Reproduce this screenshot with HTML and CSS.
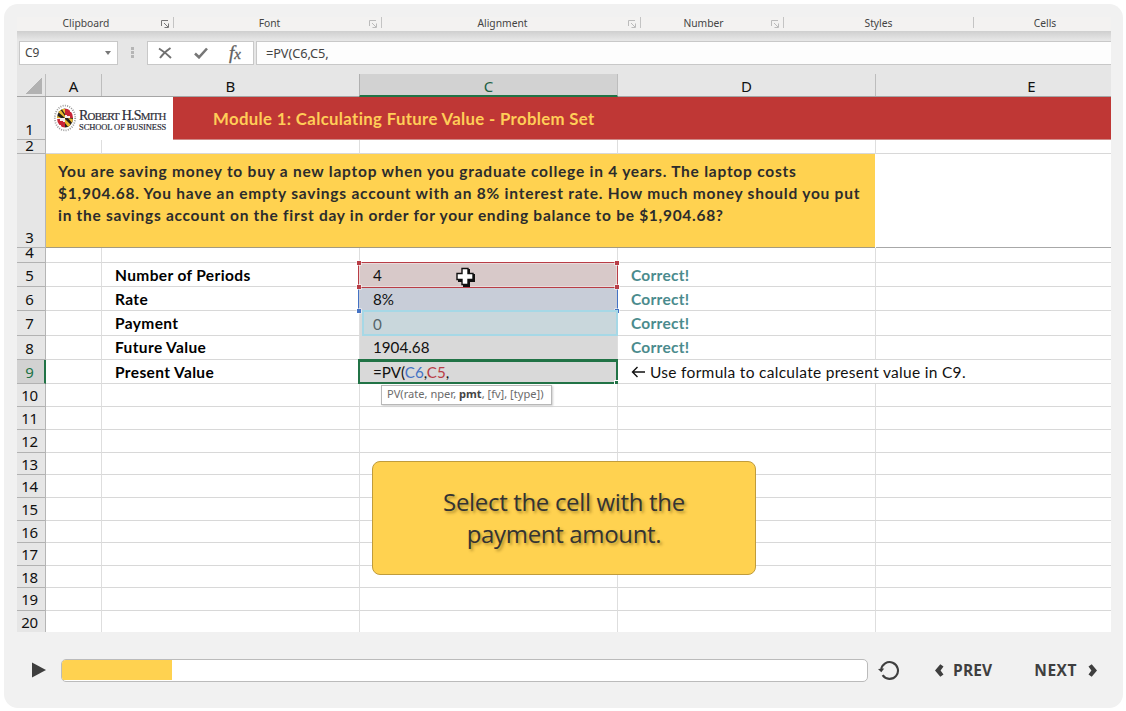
FILE: index.html
```html
<!DOCTYPE html>
<html lang="en">
<head>
<meta charset="utf-8">
<title>Calculating Future Value</title>
<link rel="stylesheet" href="styles.css">
</head>
<body>
<svg class="defs" width="0" height="0">
  <symbol id="launcher" viewBox="0 0 9 8"><path d="M.5 6V.5H7M3 3l4 4M7.5 3.5v4h-4" fill="none" stroke="currentColor"/></symbol>
</svg>
<main class="player">
  <section class="screen">
    <div class="ribbon">
      <div class="group clipboard"><span>Clipboard</span><svg class="launch"><use href="#launcher"/></svg></div>
      <div class="group font"><span>Font</span><svg class="launch pale"><use href="#launcher"/></svg></div>
      <div class="group alignment"><span>Alignment</span><svg class="launch pale"><use href="#launcher"/></svg></div>
      <div class="group number"><span>Number</span><svg class="launch pale"><use href="#launcher"/></svg></div>
      <div class="group styles"><span>Styles</span></div>
      <div class="group cells"><span>Cells</span></div>
    </div>
    <div class="formula-bar">
      <div class="name-box"><span>C9</span><i class="caret"></i></div>
      <div class="dots"><i></i><i></i><i></i></div>
      <div class="tools">
        <svg width="14" height="12" viewBox="0 0 14 12"><path d="M1 1.5C5 4 9 7 13 11M12.5 1C8 4 4 8 2 11" fill="none" stroke="#707070" stroke-width="1.9"/></svg>
        <svg width="14" height="12" viewBox="0 0 14 12"><path d="M1 6.5l4 3.8L13 1.5" fill="none" stroke="#777" stroke-width="2.6"/></svg>
        <span class="fx">f<small>x</small></span>
      </div>
      <div class="formula">=PV(C6,C5,</div>
    </div>
    <div class="columns">
      <div class="corner"><i></i></div><div>A</div><div>B</div><div class="active">C</div><div>D</div><div>E</div>
    </div>
    <div class="sheet">
      <div class="rh r1">1</div>
      <div class="logo">
        <svg width="24" height="28" viewBox="0 0 24 28">
          <ellipse cx="12" cy="14" rx="10.2" ry="12.4" fill="none" stroke="#999" stroke-width="1.8" stroke-dasharray="1 1.3"/>
          <clipPath id="globe"><ellipse cx="12" cy="14" rx="8" ry="9.5"/></clipPath>
          <g clip-path="url(#globe)">
            <path fill="#f3eeee" d="M0 0h24v28H0z"/>
            <path fill="#26221d" d="M3 4h9v10H3zM12 14h9v10h-9z"/>
            <path fill="#eab92f" d="M4 7l3-2 5 7v2zM8 4l4 1v5zM3 11l5 3H3zM12 15l7 7-3 2-4-5zM15 14l5 1v5z"/>
            <path fill="#c92535" d="M12 4h5v4h4v6h-4v-3h-5zM3 15h4v3h5v6H8v-3H3z"/>
            <path fill="#c92535" d="M14 9h4v3h-4zM7 17h3v3H7z"/>
          </g>
        </svg>
        <div class="wordmark"><b>R<small>OBERT</small> H.S<small>MITH</small></b><span>SCHOOL OF BUSINESS</span></div>
      </div>
      <div class="banner">Module 1: Calculating Future Value - Problem Set</div>

      <div class="rh r2">2</div><i></i><i></i><i></i><i></i><i class="edge"></i>

      <div class="rh r3">3</div>
      <div class="problem"><p>You are saving money to buy a new laptop when you graduate college in 4 years. The laptop costs</p><p>$1,904.68. You have an empty savings account with an 8% interest rate. How much money should you put</p><p>in the savings account on the first day in order for your ending balance to be $1,904.68?</p></div><i class="edge below-problem"></i>

      <div class="rh r4">4</div><i></i><i></i><i></i><i></i><i class="edge"></i>

      <div class="rh">5</div><i></i><div class="label">Number of Periods</div>
      <div class="value periods">4<b class="h tl"></b><b class="h tr"></b><b class="h bl"></b><b class="h br"></b>
        <svg class="cursor" width="20" height="20" viewBox="0 0 20 20"><path d="M8 2h7v5h5v8h-5v5H8v-5H3V7h5z" fill="#111"/><path d="M7 1.5h6v5h5v6h-5v5H7v-5H2v-6h5z" fill="#fff" stroke="#111" stroke-width="1.4"/></svg></div>
      <div class="check">Correct!</div><i class="edge"></i>

      <div class="rh">6</div><i></i><div class="label">Rate</div><div class="value rate">8%<b class="h bl"></b><b class="h br"></b></div><div class="check">Correct!</div><i class="edge"></i>

      <div class="rh">7</div><i></i><div class="label">Payment</div><div class="value payment"><span>0</span></div><div class="check">Correct!</div><i class="edge"></i>

      <div class="rh">8</div><i></i><div class="label up">Future Value</div><div class="value up">1904.68</div><div class="check up">Correct!</div><i class="edge"></i>

      <div class="rh active">9</div><i></i><div class="label">Present Value</div>
      <div class="value present"><span>=PV(<em class="blue">C6</em>,<em class="red">C5</em>,</span><b class="grip"></b>
        <div class="hint">PV(rate, nper, <strong>pmt</strong>, [fv], [type])</div></div>
      <div class="note"><svg width="15" height="12" viewBox="0 0 15 12"><path d="M14 6H1.5M6.5 1l-5 5 5 5" fill="none" stroke="#111" stroke-width="1.4"/></svg><span>Use formula to calculate present value in C9.</span></div>

      <div class="rh">10</div><i></i><i></i><i></i><i></i><i class="edge"></i>
      <div class="rh">11</div><i></i><i></i><i></i><i></i><i class="edge"></i>
      <div class="rh">12</div><i></i><i></i><i></i><i></i><i class="edge"></i>
      <div class="rh">13</div><i></i><i></i><i></i><i></i><i class="edge"></i>
      <div class="rh">14</div><i></i><i></i><i></i><i></i><i class="edge"></i>
      <div class="rh">15</div><i></i><i></i><i></i><i></i><i class="edge"></i>
      <div class="rh">16</div><i></i><i></i><i></i><i></i><i class="edge"></i>
      <div class="rh">17</div><i></i><i></i><i></i><i></i><i class="edge"></i>
      <div class="rh">18</div><i></i><i></i><i></i><i></i><i class="edge"></i>
      <div class="rh">19</div><i></i><i></i><i></i><i></i><i class="edge"></i>
      <div class="rh last">20</div><i class="last"></i><i class="last"></i><i class="last"></i><i class="last"></i><i class="edge last"></i>
    </div>
    <div class="callout">Select the cell with the<br>payment amount.</div>
  </section>
  <footer class="controls">
    <svg class="play" width="14" height="16" viewBox="0 0 14 16"><path d="M0 .5L14 8 0 15.5z" fill="#3f3f3f"/></svg>
    <div class="track"><div class="fill"></div></div>
    <svg class="replay" width="22" height="21" viewBox="0 0 22 21"><path d="M3.2 9.8A8.4 8.4 0 1 1 4.6 15.2" fill="none" stroke="#3f3f3f" stroke-width="2.1"/><path d="M0 9l6.2-.5L3.3 12.3z" fill="#3f3f3f"/></svg>
    <div class="nav prev"><svg width="9" height="13" viewBox="0 0 9 13"><path d="M0 6.5L5.3.3 8.500 2.5 5.6 6.5l2.9 4-3.2 2.2z" fill="#3f3f3f"/></svg><span>PREV</span></div>
    <div class="nav next"><span>NEXT</span><svg width="9" height="13" viewBox="0 0 9 13"><path d="M9 6.5L3.7.3.5 2.5l2.9 4-2.9 4 3.2 2.2z" fill="#3f3f3f"/></svg></div>
  </footer>
</main>
</body>
</html>
```
FILE: styles.css
```css
* { box-sizing: border-box; }
body { margin: 0; background: #fff; font-family: Lato, sans-serif; color: #111; }
.defs { display: block; height: 0; }
.player { width: 1119px; height: 704px; margin: 4px 0 0 4px; padding: 13px 12px 0 13px; background: #f1f1f1; border-radius: 14px; }
.screen { position: relative; width: 1094px; height: 615px; background: #e6e6e6; overflow: hidden; white-space: nowrap; }

.ribbon { display: flex; height: 14px; background: #f3f2f1; font: 10.3px/14px "Noto Sans", sans-serif; color: #444; }
.group { position: relative; height: 11px; border-right: 1px solid #c4c4c4; }
.group span { display: block; line-height: 13px; text-align: center; }
.clipboard { width: 157px; padding-right: 18px; }
.font { width: 208px; padding-right: 16px; }
.alignment { width: 259px; padding-right: 17px; }
.number { width: 143px; padding-right: 17px; }
.styles { width: 190px; }
.cells { width: 120px; padding-left: 22px; border: 0; }
.launch { position: absolute; right: 3px; top: 3px; width: 9px; height: 8px; color: #777; }
.launch.pale { color: #bbb; }

.formula-bar { display: flex; height: 43px; padding: 10px 0 9px 2px; background: linear-gradient(#cfcfcf, #e6e6e6 9px); font: 13px/22px "Noto Sans", sans-serif; color: #444; }
.name-box { display: flex; justify-content: space-between; align-items: center; width: 99px; padding: 0 6px 0 5px; background: #fff; border: 1px solid #c8c8c8; font-size: 12px; }
.caret { border: 3.5px solid transparent; border-top: 4px solid #777; border-bottom: 0; }
.dots { display: flex; flex-direction: column; gap: 1px; width: 29px; padding: 6px 0 0 13px; }
.dots i { width: 3px; height: 3px; background: #b5b5b5; }
.tools { display: flex; align-items: center; width: 107px; padding-left: 10px; gap: 22px; background: #fff; border: 1px solid #c8c8c8; }
.fx { margin-left: -1px; font: italic 19px/20px "Liberation Serif", serif; color: #606060; -webkit-text-stroke: .3px #606060; }
.fx small { font-size: 15px; }
.formula { flex: 1; margin-left: 2px; padding-left: 9px; background: #fdfdfd; border: 1px solid #c8c8c8; border-right: 0; font-size: 12.8px; letter-spacing: -.1px; }

.columns, .sheet { display: grid; grid-template-columns: 29px 56px 258px 258px 258px 235px; }
.columns { height: 23px; font: 15px/24px "Noto Sans", sans-serif; text-align: center; border-bottom: 1px solid #a5a5a5; }
.columns > div { height: 22px; border-right: 1px solid #bdbdbd; }
.columns > div:last-child { border: 0; padding-left: 76px; }
.columns .active { height: 23px; margin-left: -1px; background: #d2d2d2; border-left: 1px solid #b0b0b0; border-bottom: 2px solid #217346; color: #215f42; }
.columns .corner { padding: 4px 0 0 9px; }
.corner i { display: block; width: 16px; height: 16px; background: linear-gradient(135deg, transparent 50%, #b2b2b2 50%); }

.sheet { grid-template-rows: 43px 14px 94px 15px 24px 24px 25px 24px 24px 23px 23px 23px 22px 23px 23px 22px 23px 22px 23px 21px; background: #fff; font-size: 15.5px; }
.sheet > * { min-width: 0; border-right: 1px solid #dedede; border-bottom: 1px solid #d8d8d8; }
.sheet > .edge { border-right: 0; }
.sheet > .rh { display: flex; align-items: center; justify-content: center; padding: 0 3px 0 0; background: #e6e6e6; border-right: 1px solid #b5b5b5; border-bottom-color: #b2b2b2; font: 15px/18px "Noto Sans", sans-serif; letter-spacing: -.3px; }
.sheet > .r1, .sheet > .r3 { align-items: flex-end; padding-bottom: 1px; }
.sheet > .r1 { grid-area: 1 / 1; }
.sheet > .r2, .sheet > .r4 { align-items: flex-end; overflow: hidden; line-height: 16px; }
.sheet > .r4 { line-height: 19px; }
.sheet > .rh.active { background: #d2d2d2; color: #217346; border-right: 2px solid #217346; padding-right: 2px; }
.sheet > .last { border-bottom: 0; }
.sheet > .logo { grid-area: 1 / 2 / 2 / 4; display: flex; width: 127px; padding: 7px 0 0 7px; gap: 2px; border: 0; }
.wordmark { padding: 5px 0 0; font-family: "Liberation Serif", serif; color: #2d2d38; }
.wordmark b { display: block; font-weight: normal; font-size: 14px; line-height: 13px; letter-spacing: -.75px; -webkit-text-stroke: .2px #2d2d38; }
.wordmark small { font-size: 10.9px; }
.wordmark span { display: block; font-size: 8.5px; line-height: 8px; letter-spacing: -.1px; -webkit-text-stroke: .2px #2d2d38; }
.sheet > .banner { grid-area: 1 / 3 / 2 / 7; margin-left: 71px; padding-left: 40px; background: #bf3735; border-right: 0; border-bottom-color: #cf8a88; color: #ffcd58; font-weight: bold; font-size: 16.8px; line-height: 44px; letter-spacing: .33px; }
.sheet > .problem { grid-column: 2 / 6; margin-right: 1px; padding: 6px 0 0 12px; background: #ffd250; border-right: 0; border-bottom-color: #a39a80; color: #2c2c2c; font-weight: bold; font-size: 15.5px; line-height: 22px; letter-spacing: .77px; }
.problem p { margin: 0; }
.problem p:last-child { letter-spacing: .72px; }
.sheet > .below-problem { border-bottom-color: #a8a8a8; }
.label { padding-left: 13px; font-weight: bold; line-height: 25px; letter-spacing: .37px; color: #000; }
.check { padding-left: 13px; font-weight: bold; line-height: 25px; letter-spacing: .27px; color: #4b8b8d; }
.sheet > .value { position: relative; padding-left: 13px; font-size: 15.2px; line-height: 25px; background: #d9d9d9; border-bottom-color: #d9d9d9; }
.sheet > .up { line-height: 23px; }
.sheet > .periods { margin: 0 1px 0 -1px; padding-left: 14px; background: #d8c9c9; box-shadow: 0 0 0 1px #b83d46, inset 0 0 0 1px #eadada; border: 0; z-index: 2; }
.sheet > .rate { margin: 0 1px 0 -1px; padding-left: 14px; background: #c8cdd8; border: 0; box-shadow: -1px 0 #4472c4, 1px 0 #4472c4; z-index: 1; }
.h { position: absolute; width: 4px; height: 4px; background: #b83d46; box-shadow: 0 0 0 .5px #fff; }
.rate .h { background: #4472c4; }
.tl { left: -2px; top: -2px; } .tr { right: -2px; top: -2px; }
.bl { left: -2px; bottom: -2px; } .br { right: -2px; bottom: -2px; }
.cursor { position: absolute; left: 96px; top: 4px; }
.sheet > .payment { padding: 0 0 0 2px; border-right: 0; color: #56656a; }
.payment span { display: block; height: 26px; margin-top: -1px; padding-left: 9px; line-height: 24px; background: #c9d7dc; border: 2px solid #a6d8e6; position: relative; z-index: 2; }
.sheet > .present { border: 2px solid #217346; box-shadow: 0 -1px #217346; margin-left: -2px; padding-left: 13px; line-height: 21px; z-index: 3; }
.present em { font-style: normal; } .blue { color: #4472c4; } .red { color: #b83d46; }
.grip { position: absolute; right: -2px; bottom: -2px; width: 4px; height: 4px; background: #217346; border: solid #fff; border-width: 1px 0 0 1px; }
.hint { position: absolute; left: 21px; top: 23px; width: 171px; height: 20px; padding-left: 5px; background: #fff; border: 1px solid #b8b8b8; box-shadow: 1px 1px 2px #ccc; font: 11.1px/16px "Noto Sans", sans-serif; color: #6b6b6b; }
.hint strong { color: #444; }
.sheet > .note { grid-column: 5 / 7; display: flex; align-items: center; gap: 4px; padding-left: 13px; border-right: 0; letter-spacing: .3px; }

.callout { position: absolute; left: 355px; top: 444px; width: 384px; height: 114px; padding-top: 24px; background: #ffd250; border: 1px solid #c09c3c; border-radius: 8px; text-align: center; font: 24px/32px "Open Sans", sans-serif; letter-spacing: -.33px; color: #333; text-shadow: 2px 2px 3px rgba(80,60,0,.45); }

.controls { display: flex; align-items: center; height: 76px; padding-left: 15px; color: #3f3f3f; }
.track { width: 807px; height: 23px; margin-left: 15px; padding: 0 0 1px; background: #fff; border: 1px solid #bbb; border-radius: 5px; overflow: hidden; }
.fill { width: 110px; height: 20px; background: #ffd250; }
.replay { margin-left: 10px; }
.nav { display: flex; align-items: center; font: bold 15.5px/22px "Open Sans", sans-serif; letter-spacing: .15px; }
.prev { gap: 9px; margin-left: 35px; }
.next { gap: 11px; margin-left: 42px; }
.next span { letter-spacing: .5px; }
```
